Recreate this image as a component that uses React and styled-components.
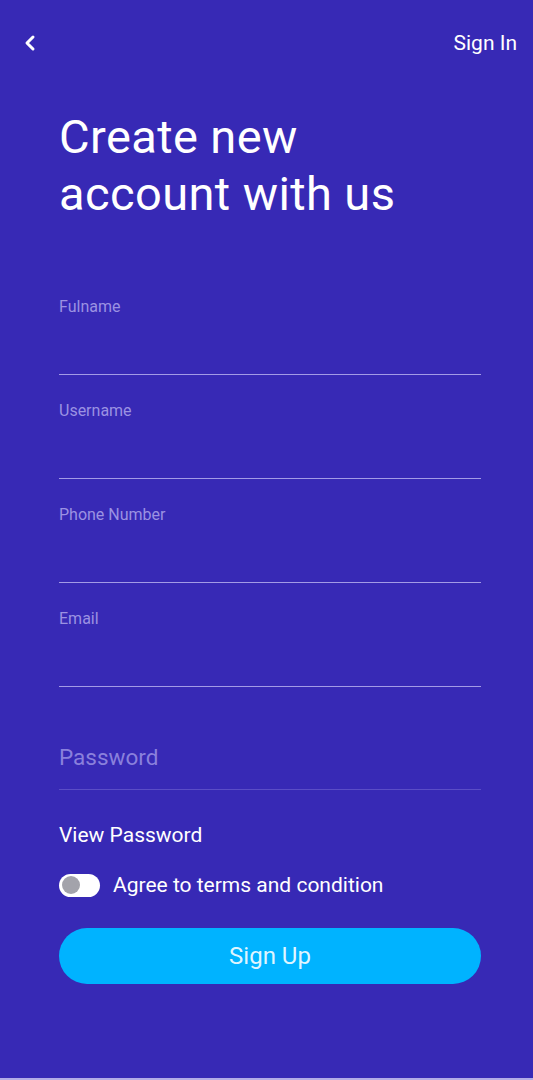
import React from 'react';
import styled, { createGlobalStyle } from 'styled-components';

const GlobalStyle = createGlobalStyle`
  html, body {
    margin: 0;
    padding: 0;
    background: #b3ace6;
  }
  * {
    box-sizing: border-box;
  }
`;

const Screen = styled.div`
  width: 533px;
  height: 1078px;
  background: #3729b5;
  font-family: Roboto, 'Noto Sans', sans-serif;
  color: #ffffff;
  display: flex;
  flex-direction: column;
`;

const TopBar = styled.div`
  height: 86px;
  padding: 0 16px 0 20px;
  display: flex;
  align-items: center;
  justify-content: space-between;
`;

const BackButton = styled.button`
  background: none;
  border: none;
  padding: 0;
  width: 20px;
  height: 20px;
  display: flex;
  align-items: center;
  justify-content: center;
  cursor: pointer;
`;

const SignInLink = styled.a`
  font-size: 21px;
  color: #ffffff;
  text-decoration: none;
`;

const Content = styled.div`
  padding: 0 52px 0 59px;
  display: flex;
  flex-direction: column;
`;

const Heading = styled.h1`
  margin: 22px 0 0 0;
  font-size: 47px;
  font-weight: 400;
  line-height: 57px;
  letter-spacing: 0.4px;
`;

const Form = styled.form`
  margin-top: 49px;
  display: flex;
  flex-direction: column;
`;

const Field = styled.label`
  display: flex;
  flex-direction: column;
  height: 104px;
  padding-top: 26px;
  border-bottom: 1.5px solid #a39be6;
`;

const FieldLabel = styled.span`
  font-size: 16px;
  color: #9b92e2;
  line-height: 20px;
`;

const Input = styled.input`
  flex: 1;
  min-height: 0;
  background: transparent;
  border: none;
  outline: none;
  color: #ffffff;
  font-family: inherit;
  font-size: ${(p) => (p.big ? '22.5px' : '18px')};
  padding: 0;
  &::placeholder {
    color: #8a80dc;
  }
`;

const PasswordField = styled.label`
  display: flex;
  flex-direction: column;
  justify-content: flex-end;
  height: 103px;
  padding-bottom: 19px;
  border-bottom: 1.5px solid #5a4dc6;
  & > input {
    flex: 0 0 26px;
  }
`;

const ViewPassword = styled.div`
  margin-top: 33px;
  font-size: 21px;
  line-height: 24px;
`;

const AgreeRow = styled.div`
  margin-top: 26px;
  display: flex;
  align-items: center;
  gap: 13px;
  font-size: 21px;
`;

const Toggle = styled.span`
  width: 41px;
  height: 23px;
  border-radius: 12px;
  background: #ffffff;
  display: flex;
  align-items: center;
  padding: 0 3px;
`;

const Knob = styled.span`
  width: 18px;
  height: 18px;
  border-radius: 50%;
  background: #a3a3ab;
`;

const SubmitButton = styled.button`
  margin-top: 31px;
  height: 56px;
  border: none;
  border-radius: 28px;
  background: #00b3ff;
  color: #dff5ff;
  font-family: inherit;
  font-size: 24px;
  cursor: pointer;
`;

const fields = ['Fulname', 'Username', 'Phone Number', 'Email'];

export default function App() {
  return (
    <>
      <GlobalStyle />
      <Screen>
        <TopBar>
          <BackButton aria-label="Back">
            <svg width="14" height="18" viewBox="0 0 14 18">
              <path d="M10 3 L4 9 L10 15" fill="none" stroke="#ffffff" strokeWidth="3" strokeLinecap="round" strokeLinejoin="round" />
            </svg>
          </BackButton>
          <SignInLink href="#">Sign In</SignInLink>
        </TopBar>
        <Content>
          <Heading>
            Create new
            <br />
            account with us
          </Heading>
          <Form onSubmit={(e) => e.preventDefault()}>
            {fields.map((f) => (
              <Field key={f}>
                <FieldLabel>{f}</FieldLabel>
                <Input />
              </Field>
            ))}
            <PasswordField>
              <Input big type="password" placeholder="Password" />
            </PasswordField>
            <ViewPassword>View Password</ViewPassword>
            <AgreeRow>
              <Toggle>
                <Knob />
              </Toggle>
              Agree to terms and condition
            </AgreeRow>
            <SubmitButton type="submit">Sign Up</SubmitButton>
          </Form>
        </Content>
      </Screen>
    </>
  );
}
